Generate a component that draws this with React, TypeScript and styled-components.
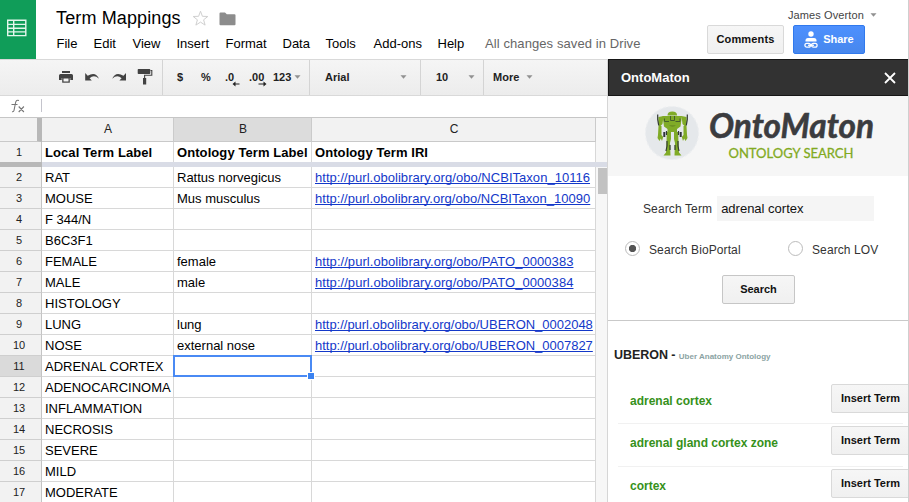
import React from "react";
import styled, { createGlobalStyle } from "styled-components";

const Global = createGlobalStyle`
  *, *::before, *::after { box-sizing: border-box; }
  html, body { margin: 0; padding: 0; overflow: hidden; background: #fff; }
  body { font-family: "Liberation Sans", Arial, sans-serif; font-size: 13px; color: #000; }
  svg { display: block; flex: none; }
  button { font-family: inherit; padding: 0; margin: 0; }
`;

const Page = styled.div`
  width: 909px;
  height: 502px;
  display: flex;
  flex-direction: column;
  overflow: hidden;
  border-right: 1px solid #cfcfcf;
`;

/* ---------- Header ---------- */
const Header = styled.header`
  display: flex;
  height: 59px;
  flex: none;
`;
const AppBadge = styled.div`
  width: 36px;
  height: 59px;
  padding: 19px 0 0 7px;
  background: #109d59;
`;
const Titles = styled.div`
  padding: 6px 0 0 20px;
  width: 671px;
`;
const TitleRow = styled.div`
  display: flex;
  align-items: center;
  height: 24px;
`;
const Title = styled.h1`
  margin: 0;
  width: 136px;
  font-size: 18px;
  line-height: 24px;
  font-weight: 400;
  letter-spacing: 0.13px;
  white-space: nowrap;
`;
const FolderIcon = styled.svg`
  margin: 1px 0 0 10px;
`;
const Menu = styled.nav`
  display: grid;
  grid-template-columns: 37px 39px 44px 49px 57px 43px 48px 64px 48px auto;
  margin-top: 5px;
  line-height: 18px;
  white-space: nowrap;
  & > span:not(:last-child) { padding-left: 0.5px; }
`;
const SaveState = styled.span`
  color: #666;
  letter-spacing: 0.09px;
`;
const Account = styled.div`
  width: 181px;
  padding-top: 7px;
`;
const UserRow = styled.div`
  display: flex;
  align-items: center;
  gap: 6px;
  height: 15px;
  padding-left: 81px;
  font-size: 11px;
  letter-spacing: 0.1px;
  color: #444;
  white-space: nowrap;
`;
const HeaderButtons = styled.div`
  display: flex;
  gap: 9px;
  margin-top: 3px;
`;
const Button = styled.button<{ $w: number; $primary?: boolean; $ls?: number; $edge?: string }>`
  display: flex;
  align-items: center;
  justify-content: center;
  flex: none;
  gap: 5px;
  width: ${(p) => p.$w}px;
  height: 29px;
  padding-bottom: 2px;
  border: 1px solid ${(p) => (p.$primary ? "#3079ed" : p.$edge || "#d9d9d9")};
  border-radius: 2px;
  background: ${(p) =>
    p.$primary ? "linear-gradient(#4d90fe, #4787ed)" : "linear-gradient(#f6f6f6, #f0f0f0)"};
  color: ${(p) => (p.$primary ? "#fff" : "#111")};
  font-size: 11px;
  font-weight: 700;
  letter-spacing: ${(p) => p.$ls || 0}px;
  white-space: nowrap;
`;

const ShareIcon = styled.svg`
  position: relative;
  top: 1px;
`;

/* ---------- Body ---------- */
const Body = styled.div`
  display: flex;
  flex: 1;
  min-height: 0;
`;
const Sheet = styled.main`
  width: 608px;
  flex: none;
  border-right: 1px solid #d6d6d6;
`;
const Toolbar = styled.div`
  display: flex;
  height: 37px;
  background: linear-gradient(#f5f5f5, #ececec);
  border-top: 1px solid #d9d9d9;
  border-bottom: 1px solid #d9d9d9;
`;
const Group = styled.div<{ $w: number; $pad: number }>`
  display: flex;
  align-items: center;
  width: ${(p) => p.$w}px;
  padding-left: ${(p) => p.$pad}px;
  padding-bottom: 1px;
  border-right: 1px solid #d4d4d4;
  &:last-child { border-right: 0; }
`;
const ToolLabel = styled.span<{ $w: number }>`
  width: ${(p) => p.$w}px;
  flex: none;
  padding-bottom: 1px;
  font-size: 11px;
  font-weight: 700;
  line-height: 14px;
  color: #222;
  white-space: nowrap;
`;
const FormulaBar = styled.div`
  display: flex;
  align-items: center;
  height: 22px;
  padding: 0 0 1px 10px;
  border-bottom: 1px solid #c6c6c6;
`;
const FormulaCaret = styled.div`
  width: 1px;
  height: 13px;
  margin-left: 14px;
  margin-bottom: 1px;
  background: #c4c4cc;
`;

const GridArea = styled.div`
  display: flex;
`;
const Grid = styled.div`
  width: 596px;
  flex: none;
`;
const Row = styled.div<{ $frozen?: boolean }>`
  display: grid;
  grid-template-columns: 42px 132px 138px 284px;
  height: ${(p) => (p.$frozen ? "20px" : "auto")};
  overflow: ${(p) => (p.$frozen ? "hidden" : "visible")};
`;
const ColHead = styled.div<{ $active?: boolean; $corner?: boolean }>`
  height: 24px;
  line-height: 23px;
  font-size: 12px;
  text-align: center;
  color: #222;
  background: ${(p) => (p.$active ? "#dcdcdc" : "#f2f2f2")};
  border-bottom: 1px solid #c9c9c9;
  border-right: ${(p) => (p.$corner ? "5px solid #b8b8b8" : "1px solid #cbcbcb")};
  padding-left: 1px;
`;
const RowHead = styled.div<{ $active?: boolean }>`
  height: 21px;
  padding-right: 3px;
  line-height: 20px;
  font-size: 11px;
  text-align: center;
  color: #222;
  background: ${(p) => (p.$active ? "#dadada" : "#f2f2f2")};
  border-bottom: 1px solid #cfcfcf;
  border-right: 1px solid #c4c4c4;
`;
const Cell = styled.div<{ $bold?: boolean }>`
  position: relative;
  height: 21px;
  padding-left: 3px;
  line-height: 21px;
  font-weight: ${(p) => (p.$bold ? 700 : 400)};
  letter-spacing: ${(p) => (p.$bold ? "0.08px" : "0")};
  white-space: nowrap;
  border-bottom: 1px solid #d8d8d8;
  border-right: 1px solid #d8d8d8;
`;
const CellLink = styled.a<{ $ls: number }>`
  color: #1338c9;
  letter-spacing: ${(p) => p.$ls}px;
  text-decoration: underline;
  text-decoration-thickness: 1px;
  text-underline-offset: 1px;
  text-decoration-skip-ink: none;
`;
const Selection = styled.div`
  position: absolute;
  left: -1px;
  top: -1px;
  width: 139px;
  height: 22px;
  border: 2px solid #4a8af4;
  z-index: 1;
  &::after {
    content: "";
    position: absolute;
    right: -5px;
    bottom: -5px;
    width: 8px;
    height: 8px;
    background: #3b82f0;
    border: 1px solid #fff;
  }
`;
const FreezeBar = styled.div`
  display: flex;
  height: 5px;
  background: #d9dce6;
  &::before {
    content: "";
    width: 42px;
    background: #b8b8b8;
  }
`;
const ScrollTrack = styled.div`
  width: 11px;
  height: 384px;
  padding-top: 44px;
  background: #f7f7f7;
`;
const ScrollFreeze = styled.div`
  height: 5px;
  background: #d9dce6;
`;
const ScrollThumb = styled.div`
  width: 9px;
  height: 26px;
  margin: 1px 0 0 2px;
  background: #c2c2c2;
`;

/* ---------- Sidebar ---------- */
const Sidebar = styled.aside`
  width: 300px;
  flex: none;
  overflow: hidden;
`;
const SideHeader = styled.div`
  display: flex;
  justify-content: space-between;
  align-items: center;
  height: 37px;
  padding: 0 12px 0 12px;
  background: #323232;
  border: 1px solid #161616;
  border-width: 1px 0 1px 1px;
  color: #fff;
  font-weight: 700;
`;
const Brand = styled.div`
  height: 80px;
  background: #f6f6f6;
`;
const SearchForm = styled.div`
  height: 145px;
  padding-top: 20px;
  border-bottom: 1px solid #c9c9c9;
  font-size: 12px;
  color: #333;
`;
const TermRow = styled.label`
  display: flex;
  align-items: center;
  height: 25px;
  padding-left: 35px;
  gap: 5px;
  letter-spacing: 0.12px;
`;
const TermInput = styled.div`
  width: 157px;
  height: 25px;
  padding-left: 4px;
  line-height: 25px;
  font-size: 13px;
  color: #111;
  background: #f5f5f5;
  letter-spacing: 0;
`;
const Radios = styled.div`
  display: grid;
  grid-template-columns: 163px auto;
  height: 18px;
  margin-top: 18px;
  padding-left: 17px;
`;
const RadioOption = styled.label`
  display: flex;
  align-items: center;
  gap: 9px;
  letter-spacing: 0.1px;
  line-height: 18px;
  white-space: nowrap;
`;
const RadioDot = styled.span<{ $on?: boolean }>`
  width: 15px;
  height: 15px;
  margin-top: -1px;
  border: 1px solid #bbb;
  border-radius: 50%;
  background: ${(p) => (p.$on ? "radial-gradient(circle, #555 3.3px, #fff 4px)" : "#fff")};
`;
const RadioText = styled.span`
  padding-top: 2px;
`;
const SubmitRow = styled.div`
  margin: 18px 0 0 114px;
`;
const Results = styled.section`
  padding-top: 25px;
`;
const OntologyName = styled.h2`
  margin: 0 0 16px 6px;
  font-size: 12.5px;
  line-height: 18px;
  color: #222;
  font-weight: 700;
  letter-spacing: -0.05px;
  white-space: nowrap;
`;
const OntologyDetail = styled.span`
  font-size: 8px;
  letter-spacing: 0;
  color: #8ba3a3;
`;
const ResultRow = styled.div<{ $h: number }>`
  display: flex;
  justify-content: space-between;
  align-items: flex-start;
  height: ${(p) => p.$h}px;
  margin-left: 10px;
  padding: 2px 0 0 12px;
  margin-right: 5px;
  border-bottom: 1px solid #f1f1f1;
`;
const ResultName = styled.span`
  padding-top: 10px;
  font-size: 12px;
  line-height: 14px;
  font-weight: 700;
  color: #36911b;
`;
const ResultAction = styled.div`
  width: 62px;
  margin-right: 10px;
`;

const Caret = () => (
  <svg width="7" height="4" viewBox="0 0 7 4"><path d="M.5 .3h6L3.5 3.7z" fill="#919191" /></svg>
);

const Robot = () => (
  <g>
    <circle cx="64" cy="37" r="26.5" fill="#e5e8eb" stroke="#eceef0" strokeWidth="1.2" strokeDasharray="3 2" />
    <g fill="#80ab27">
      <path d="M59.500 19.500q0-4 4.800-4t4.800 4z" />
      <path d="M54.500 20h19.500l-1.500 10.500-3.500 2.500v3h-9.500v-3l-3.500-2.500z" />
      <path d="M50.500 21l5-1-1 8-3 3-1.500-3z" />
      <path d="M78.500 21l-5-1 1 8 3 3 1.500-3z" />
      <path d="M50.500 30h3v9l1.700 2-1.200 4-1.200-2.500-1.300 2.500-2-3 .5-3z" />
      <path d="M78.500 30h-3v9l-1.700 2 1.200 4 1.200-2.500 1.300 2.500 2-3-.5-3z" />
      <path d="M58.800 36h4.200v7l-1 4 .5 12.500h-7l2.500-3 .5-9z" />
      <path d="M70.200 36h-4.200v7l1 4-.5 12.500h7l-2.500-3-.5-9z" />
    </g>
    <g fill="none" stroke="#333a35" strokeWidth="1.200">
      <path d="M49.700 18.500v5l1 6M79.300 18.500v5l-1 6" />
      <path d="M56.500 22.500v3h4.500M72 22.500v3h-4.500M62.500 20v4.500h4V20" stroke="#46602c" strokeWidth="1" />
      <path d="M58.500 35v4M70.500 35v4M59 45v5l-1 5M70 45v5l1 5M62 49v5M67 49v5" />
    </g>
    <path d="M61 29.500q3.500 2 7 0z" fill="#5c7f1f" />
    <path d="M55.300 36h2v5h-2zM71.700 36h2v5h-2z" fill="#30343a" />
  </g>
);

const rows: [string, string, string, number][] = [
  ["RAT", "Rattus norvegicus", "NCBITaxon_10116", 0.035],
  ["MOUSE", "Mus musculus", "NCBITaxon_10090", 0.02],
  ["F 344/N", "", "", 0],
  ["B6C3F1", "", "", 0],
  ["FEMALE", "female", "PATO_0000383", 0.05],
  ["MALE", "male", "PATO_0000384", 0.05],
  ["HISTOLOGY", "", "", 0],
  ["LUNG", "lung", "UBERON_0002048", -0.02],
  ["NOSE", "external nose", "UBERON_0007827", -0.02],
  ["ADRENAL CORTEX", "", "", 0],
  ["ADENOCARCINOMA", "", "", 0],
  ["INFLAMMATION", "", "", 0],
  ["NECROSIS", "", "", 0],
  ["SEVERE", "", "", 0],
  ["MILD", "", "", 0],
  ["MODERATE", "", "", 0],
];
const menus = ["File", "Edit", "View", "Insert", "Format", "Data", "Tools", "Add-ons", "Help"];
const results: [string, number][] = [
  ["adrenal cortex", 42],
  ["adrenal gland cortex zone", 43],
  ["cortex", 43],
];

export default function App() {
  return (
    <>
      <Global />
      <Page>
        <Header>
          <AppBadge>
            <svg width="20" height="18" viewBox="0 0 20 18" fill="none" stroke="#e4f6ec" strokeWidth="1.4">
              <path d="M.7 1.200h18.100v15.400H.7zM.7 5.400h18.100M.7 9.200h18.100M.7 12.900h18.100M6.700 1.200v15.400" />
            </svg>
          </AppBadge>
          <Titles>
            <TitleRow>
              <Title>Term Mappings</Title>
              <svg width="17" height="17" viewBox="0 0 17 17" fill="none" stroke="#d0d0d0">
                <path d="M8.500 1.200l1.900 5.100 5.400.2-4.200 3.300 1.500 5.300-4.600-3-4.600 3 1.500-5.300L1.200 6.500l5.400-.2z" />
              </svg>
              <FolderIcon width="18" height="14" viewBox="0 0 18 14">
                <path d="M1.500.5h4.500l1.800 1.800h7.700q1 0 1 1v9q0 1-1 1h-14q-1 0-1-1V1.500q0-1 1-1z" fill="#8c8c8c" />
              </FolderIcon>
            </TitleRow>
            <Menu>
              {menus.map((m) => <span key={m}>{m}</span>)}
              <SaveState>All changes saved in Drive</SaveState>
            </Menu>
          </Titles>
          <Account>
            <UserRow>James Overton<Caret /></UserRow>
            <HeaderButtons>
              <Button $w={77} $ls={0.15}>Comments</Button>
              <Button $w={72} $primary $ls={-0.05}>
                <ShareIcon width="14" height="18" viewBox="0 0 14 18">
                  <circle cx="7" cy="3" r="2.700" fill="#fff" />
                  <path d="M1.500 10.500V9.500Q1.500 7 4 7h6q2.500 0 2.500 2.500v1z" fill="#fff" />
                  <g fill="none" stroke="#fff" strokeWidth="1.300">
                    <rect x=".9" y="12.300" width="5.600" height="3.900" rx="1.900" />
                    <rect x="7.500" y="12.300" width="5.600" height="3.900" rx="1.900" />
                    <path d="M4 14.250h6" />
                  </g>
                </ShareIcon>
                Share
              </Button>
            </HeaderButtons>
          </Account>
        </Header>
        <Body>
          <Sheet>
            <Toolbar>
              <Group $w={163} $pad={59}>
                <svg width="100" height="20" viewBox="0 0 100 20">
                  <g fill="#424242">
                    <path d="M3 4h8v2H3zM1.500 7h11Q14 7 14 8.500V13h-2.700v-2H2.700v2H0V8.500Q0 7 1.500 7z" />
                    <path d="M3.200 11h7.600v4.700H3.200z" />
                    <path d="M4.500 11.500h5v3h-5z" fill="#f4f4f4" />
                    <path d="M26.200 6v7.500h6.600l-2.200-2.200q4.400-4.300 9.400.4-3.300-7.500-11.300-3z" />
                    <path d="M67 6v7.500h-6.600l2.200-2.200q-4.400-4.300-9.400.4 3.300-7.500 11.300-3z" />
                    <path d="M79.500 2h11q.8 0 .8.800v3.400q0 .8-.8.800h-11q-.8 0-.8-.8V2.800q0-.8.8-.8zM84 11h3.200v6.500H84z" />
                  </g>
                  <path d="M91.500 3.500h1.300v4.800h-7.200V11" fill="none" stroke="#424242" strokeWidth="1.100" />
                </svg>
              </Group>
              <Group $w={147} $pad={14}>
                <ToolLabel $w={24}>$</ToolLabel>
                <ToolLabel $w={24}>%</ToolLabel>
                <svg width="48" height="20" viewBox="0 0 48 20" fill="#222" fontFamily="Liberation Sans" fontSize="11" fontWeight="700">
                  <text x="0" y="14">.0</text>
                  <text x="24" y="14">.00</text>
                  <path d="M7.500 17l3-2.400v1.800h4v1.200h-4v1.800zM41.500 17l-3-2.400v1.800h-5v1.200h5v1.800z" />
                </svg>
                <ToolLabel $w={21}>123</ToolLabel>
                <Caret />
              </Group>
              <Group $w={111} $pad={15}><ToolLabel $w={75}>Arial</ToolLabel><Caret /></Group>
              <Group $w={63} $pad={15}><ToolLabel $w={32}>10</ToolLabel><Caret /></Group>
              <Group $w={123} $pad={9}><ToolLabel $w={33}>More</ToolLabel><Caret /></Group>
            </Toolbar>
            <FormulaBar>
              <svg width="17" height="17" viewBox="0 0 17 17" fill="none" stroke="#777" strokeWidth="1.100">
                <path d="M9 2.500Q6.200 1.500 5.600 4.500L4 12.500Q3.700 14 2 13.700M1.500 6.500h6M8.700 8.500l5.200 5.500M13.900 8.500L8.700 14" />
              </svg>
              <FormulaCaret />
            </FormulaBar>
            <GridArea>
              <Grid>
                <Row>
                  <ColHead $corner />
                  <ColHead>A</ColHead>
                  <ColHead $active>B</ColHead>
                  <ColHead>C</ColHead>
                </Row>
                <Row $frozen>
                  <RowHead>1</RowHead>
                  <Cell $bold>Local Term Label</Cell>
                  <Cell $bold>Ontology Term Label</Cell>
                  <Cell $bold>Ontology Term IRI</Cell>
                </Row>
                <FreezeBar />
                {rows.map(([a, b, c, ls], i) => (
                  <Row key={a}>
                    <RowHead $active={i === 9}>{i + 2}</RowHead>
                    <Cell>{a}</Cell>
                    <Cell>{b}{i === 9 && <Selection />}</Cell>
                    <Cell>{c && <CellLink $ls={ls}>{"http://purl.obolibrary.org/obo/" + c}</CellLink>}</Cell>
                  </Row>
                ))}
              </Grid>
              <ScrollTrack>
                <ScrollFreeze />
                <ScrollThumb />
              </ScrollTrack>
            </GridArea>
          </Sheet>
          <Sidebar>
            <SideHeader>
              OntoMaton
              <svg width="12" height="12" viewBox="0 0 12 12" stroke="#fff" strokeWidth="1.800"><path d="M1 1l10 10M11 1L1 11" /></svg>
            </SideHeader>
            <Brand>
              <svg width="300" height="80" viewBox="0 0 300 80">
                <Robot />
                <text x="101" y="42" fontFamily="Lato" fontStyle="italic" fontWeight="700" fontSize="35" fill="#3b3c3f" stroke="#3b3c3f" strokeWidth=".6" textLength="165" lengthAdjust="spacingAndGlyphs">OntoMaton</text>
                <text x="120.500" y="61.500" fontFamily="Lato" fontSize="13.500" fill="#82aa22" stroke="#82aa22" strokeWidth=".3" textLength="125" lengthAdjust="spacingAndGlyphs">ONTOLOGY SEARCH</text>
              </svg>
            </Brand>
            <SearchForm>
              <TermRow>Search Term<TermInput>adrenal cortex</TermInput></TermRow>
              <Radios>
                <RadioOption><RadioDot $on /><RadioText>Search BioPortal</RadioText></RadioOption>
                <RadioOption><RadioDot /><RadioText>Search LOV</RadioText></RadioOption>
              </Radios>
              <SubmitRow><Button $w={73} $edge="#c6c6c6">Search</Button></SubmitRow>
            </SearchForm>
            <Results>
              <OntologyName>UBERON - <OntologyDetail>Uber Anatomy Ontology</OntologyDetail></OntologyName>
              {results.map(([name, h]) => (
                <ResultRow key={name} $h={h}>
                  <ResultName>{name}</ResultName>
                  <ResultAction><Button $w={79}>Insert Term</Button></ResultAction>
                </ResultRow>
              ))}
            </Results>
          </Sidebar>
        </Body>
      </Page>
    </>
  );
}
